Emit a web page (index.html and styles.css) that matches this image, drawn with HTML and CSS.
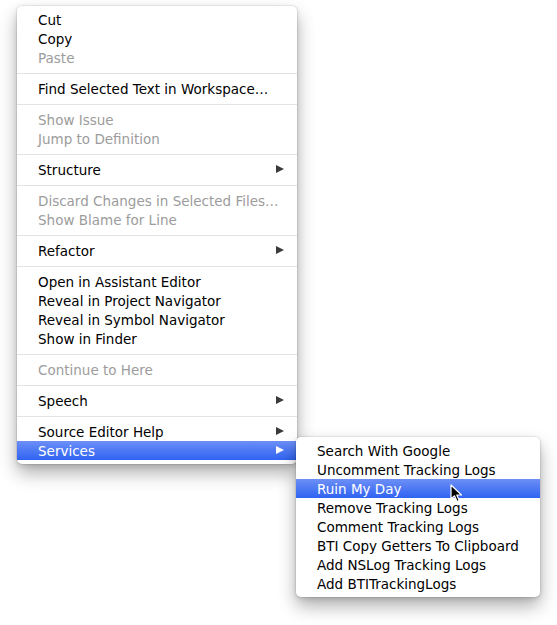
FILE: index.html
```html
<!DOCTYPE html>
<html>
<head>
<meta charset="utf-8">
<link rel="stylesheet" href="styles.css">
</head>
<body>
<div class="stage">
  <div class="menu main">
    <div class="item">Cut</div>
    <div class="item">Copy</div>
    <div class="item off">Paste</div>
    <div class="sep"></div>
    <div class="item">Find Selected Text in Workspace…</div>
    <div class="sep"></div>
    <div class="item off">Show Issue</div>
    <div class="item off">Jump to Definition</div>
    <div class="sep"></div>
    <div class="item sub">Structure<span class="arrow"></span></div>
    <div class="sep"></div>
    <div class="item off">Discard Changes in Selected Files…</div>
    <div class="item off">Show Blame for Line</div>
    <div class="sep"></div>
    <div class="item sub">Refactor<span class="arrow"></span></div>
    <div class="sep"></div>
    <div class="item">Open in Assistant Editor</div>
    <div class="item">Reveal in Project Navigator</div>
    <div class="item">Reveal in Symbol Navigator</div>
    <div class="item">Show in Finder</div>
    <div class="sep"></div>
    <div class="item off">Continue to Here</div>
    <div class="sep"></div>
    <div class="item sub">Speech<span class="arrow"></span></div>
    <div class="sep"></div>
    <div class="item sub">Source Editor Help<span class="arrow"></span></div>
    <div class="item sub hl">Services<span class="arrow"></span>
      <div class="menu submenu">
        <div class="item">Search With Google</div>
        <div class="item">Uncomment Tracking Logs</div>
        <div class="item hl">Ruin My Day
          <svg class="cursor" width="14" height="20" viewBox="0 0 14 20">
            <path d="M1 1 L1 15 L4.5 11.8 L7 17.5 L9.2 16.5 L6.8 11 L11.5 11 Z" fill="#000" stroke="#fff" stroke-width="1.2" stroke-linejoin="round"/>
          </svg>
        </div>
        <div class="item">Remove Tracking Logs</div>
        <div class="item">Comment Tracking Logs</div>
        <div class="item">BTI Copy Getters To Clipboard</div>
        <div class="item">Add NSLog Tracking Logs</div>
        <div class="item">Add BTITrackingLogs</div>
      </div>
    </div>
  </div>
</div>
</body>
</html>
```
FILE: styles.css
```css
html, body {
  margin: 0;
  padding: 0;
  background: #ffffff;
}
.stage {
  box-sizing: border-box;
  min-height: 625px;
  padding: 6px 0 0 17px;
  font-family: "DejaVu Sans", "Liberation Sans", sans-serif;
  font-size: 13.5px;
  color: #000;
}
.menu {
  background: #fff;
  border-radius: 5px;
  padding: 4px 0 4px;
  box-shadow: 0 0 0 1px rgba(0,0,0,0.06), 0 9px 18px rgba(0,0,0,0.32), 0 2px 5px rgba(0,0,0,0.12);
}
.main {
  width: 280px;
}
.item {
  position: relative;
  height: 19px;
  box-sizing: border-box;
  padding-top: 1px;
  line-height: 18px;
  padding-left: 21px;
  white-space: nowrap;
}
.item.off {
  color: #9c9c9c;
}
.item.hl {
  color: #fff;
  background: linear-gradient(#6d8ff6, #2f63f2);
}
.sep {
  height: 1px;
  margin: 6px 0 5px;
  background: #e3e3e3;
}
.arrow {
  position: absolute;
  right: 13px;
  top: 5px;
  width: 0;
  height: 0;
  border-top: 4.5px solid transparent;
  border-bottom: 4.5px solid transparent;
  border-left: 8px solid #3a3a3a;
}
.hl .arrow {
  border-left-color: #fff;
}
.submenu {
  position: absolute;
  left: 279px;
  top: -4px;
  width: 244px;
  padding: 4px 0 4px;
  color: #000;
  z-index: 2;
}
.submenu .item {
  color: #000;
}
.submenu .item.hl {
  color: #fff;
}
.cursor {
  position: absolute;
  left: 154px;
  top: 5px;
}
```
